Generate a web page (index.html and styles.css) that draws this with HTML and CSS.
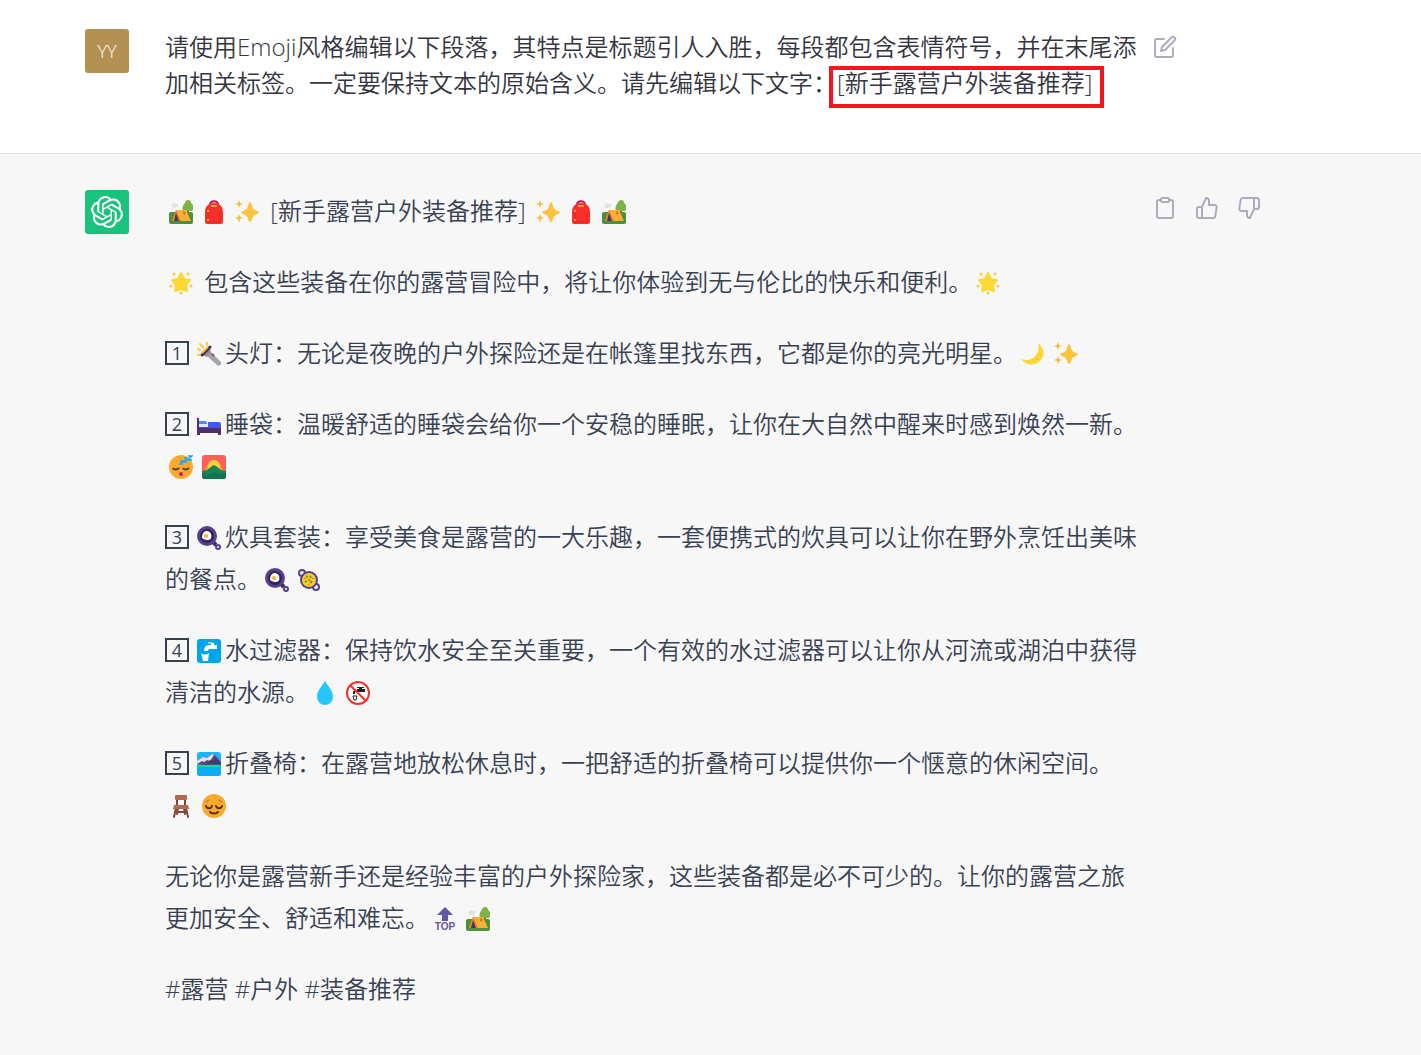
FILE: index.html
```
<!DOCTYPE html>
<html lang="zh-CN">
<head>
    <meta charset="UTF-8">
    <meta name="viewport" content="width=device-width, initial-scale=1.0">
    <title>新手露营户外装备推荐</title>
    <link rel="stylesheet" href="styles.css">
</head>
<body>
    <!-- Icon sprite -->
    <svg class="sprite" aria-hidden="true">
        <symbol id="camp" viewBox="0 0 24 24">
            <path d="M3 5c0-2 3-3 4-1 2-1 3 1 2 2L7 8H4C2 8 2 6 3 5z" fill="#e3e3e3"/>
            <path d="M18 7h2v8h-2z" fill="#8a5a44"/>
            <path d="M19 0c-2 0-3 2-3 3-2 1-4 7-1 8h8c2-2 2-6-1-8 0-2-1-3-3-3z" fill="#7cb342"/>
            <rect y="12" width="24" height="12" rx="2" fill="#4c8f3c"/>
            <path d="M7 10h10l5 11H3z" fill="#fbb034"/>
            <path d="M7 10l5 11H3z" fill="#f57c1f"/>
            <path d="M7 13l3 8H5z" fill="#3a3a72"/>
            <path d="M14 11l3 1-1 3-2-1z" fill="#f2701d"/>
        </symbol>
        <symbol id="bag" viewBox="0 0 24 24">
            <path d="M8 5c0-5 8-5 8 0" fill="none" stroke="#c2185b" stroke-width="2"/>
            <path d="M3 12c0-6 4-9 9-9s9 3 9 9v10c0 1-1 2-2 2H5c-1 0-2-1-2-2z" fill="#f92f2a"/>
            <path d="M6 12v10h12V12" fill="none" stroke="#df2428"/>
            <path d="M9 6h6M6 10v2M6 19v2" stroke="#ffa233" stroke-width="2"/>
        </symbol>
        <symbol id="sparkles" viewBox="0 0 24 24">
            <path d="M15 2c1 0 1 1 2 4 1 3 2 4 5 5s2 2 0 3c-3 1-4 2-5 5-1 4-3 4-4 0-1-3-2-4-5-5-2-1-3-2 0-3s4-2 5-5c1-3 1-4 2-4z" fill="#fcc43c"/>
            <path d="M4 0l1 3 3 1-3 1-1 3-1-3-3-1 3-1zM4 14l1 3 3 1-3 1-1 4-1-4-3-1 3-1z" fill="#fcb83c"/>
        </symbol>
        <symbol id="star" viewBox="0 0 24 24">
            <path d="M12 2l3 6 6 1-4 5 1 6-6-2-6 2 1-6-4-5 6-1z" fill="#fdd835" stroke="#fdd835" stroke-width="2" stroke-linejoin="round"/>
            <g fill="#fccb3a"><circle cx="5" cy="3" r="1.500"/><circle cx="19" cy="3" r="1.500"/><circle cx="2" cy="15" r="1.500"/><circle cx="22" cy="15" r="1.500"/><circle cx="12" cy="22" r="1.500"/></g>
        </symbol>
        <symbol id="torch" viewBox="0 0 24 24">
            <path d="M10 11l3-2 11 11c1 2-2 5-4 3L9 13z" fill="#a9a1ae"/>
            <path d="M5 13l8-8 1 6-4 4z" fill="#998ea3"/>
            <path d="M5 13l8-8" stroke="#40304d" stroke-width="3" stroke-linecap="round"/>
            <path d="M5 11l6-6" stroke="#ffb02e" stroke-width="2"/>
            <path d="M3 8L1 7M6 5L3 2M10 3V0M2 13H0" stroke="#ffc83d" stroke-width="2" stroke-linecap="round"/>
            <path d="M15 12l2 2" stroke="#655a6c" stroke-width="2"/>
        </symbol>
        <symbol id="moon" viewBox="0 0 24 24">
            <path d="M17 1c9 7 6 17-1 20-6 3-12 1-16-4 6 2 11 1 15-4 3-4 3-8 2-12z" fill="#fdd835"/>
            <circle cx="16" cy="17" r="1" fill="#f2bd2c"/><circle cx="19" cy="12" r="1" fill="#f2bd2c"/>
        </symbol>
        <symbol id="bed" viewBox="0 0 24 24">
            <path d="M0 5h2v9h22v8h-3v-2H3v2H0z" fill="#4b2f70"/>
            <path d="M2 14h22v1H2z" fill="#6d4aa1"/>
            <path d="M11 9h11c1 0 2 1 2 2v3H11z" fill="#3d58ff"/>
            <path d="M2 8h6c2 0 2 2 2 3H2z" fill="#4f8bff"/>
            <path d="M2 11h9v3H2z" fill="#dfe6ff"/>
        </symbol>
        <symbol id="sleeping" viewBox="0 0 24 24">
            <circle cx="12" cy="12" r="12" fill="#fcaa2b"/>
            <path d="M4 13c1 2 4 2 6 0M14 13c1 2 4 2 6 0" fill="none" stroke="#5c3a25" stroke-width="2"/>
            <ellipse cx="12" cy="19" rx="2" ry="2" fill="#bb1d80"/>
            <path d="M11 6h3l-3 3h3M15 3h3l-3 4h3M19 1h4l-4 4h4" fill="none" stroke="#1ba6f2" stroke-width="1.500"/>
        </symbol>
        <symbol id="sunrise" viewBox="0 0 24 24">
            <rect width="24" height="24" rx="3" fill="#ff5f57"/>
            <path d="M3 16a9 9 0 0 1 18 0z" fill="#ff9b2e"/>
            <circle cx="12" cy="11" r="6" fill="#ffd43b"/>
            <path d="M0 16l5-1 5-4c1-1 3-1 4 0l5 4 5 1v5c0 2-1 3-3 3H3c-2 0-3-1-3-3z" fill="#16855b"/>
            <path d="M0 18l6 2 6-3 6 3 6-2v3c0 2-1 3-3 3H3c-2 0-3-1-3-3z" fill="#0d7650"/>
        </symbol>
        <symbol id="egg-pan" viewBox="0 0 24 24">
            <path d="M16 16l3 3" stroke="#3d2d5c" stroke-width="4"/>
            <circle cx="21" cy="21" r="2" fill="none" stroke="#55428a" stroke-width="2"/>
            <circle cx="10" cy="10" r="10" fill="#55428a"/>
            <circle cx="10" cy="10" r="7" fill="#33245a"/>
            <path d="M7 6c2-2 6-1 7 2s0 6-3 6-6-1-6-3 1-4 2-5z" fill="#fff"/>
            <circle cx="9" cy="10" r="2" fill="#ffb02e"/>
        </symbol>
        <symbol id="paella" viewBox="0 0 24 24">
            <g fill="none" stroke="#55428a" stroke-width="2"><circle cx="4" cy="5" r="3"/><circle cx="18" cy="19" r="3"/></g>
            <circle cx="11" cy="12" r="9" fill="#55428a"/>
            <circle cx="11" cy="12" r="7" fill="#ffc928"/>
            <path d="M8 8l2 1M13 8l-1 2M7 13l2 1M12 15l2-2M15 10v1" stroke="#6aa23a" stroke-width="2"/>
            <path d="M10 12h2M7 10v1M10 17h1" stroke="#f47a22" stroke-width="2"/>
        </symbol>
        <symbol id="tap" viewBox="0 0 24 24">
            <rect width="24" height="24" rx="3" fill="#00a6ed"/>
            <path d="M7 12c0-4 2-6 6-6h7v4h-7c-2 0-2 1-2 2z" fill="#fff"/>
            <path d="M11 3l6 1v3h-3V5l-3-1z" fill="#fff"/>
            <path d="M4 14c2 2 5 2 8 0l-1 8H6z" fill="#fff"/>
        </symbol>
        <symbol id="drop" viewBox="0 0 24 24">
            <path d="M12 0c3 5 8 10 8 15 0 12-16 12-16 0C4 10 9 5 12 0z" fill="#26c6fc"/>
        </symbol>
        <symbol id="no-water" viewBox="0 0 24 24">
            <circle cx="12" cy="12" r="11" fill="#fff"/>
            <path d="M7 13v-2c0-1 1-2 3-2h1V8h2V7h-2V6h7v1h-2v1h3v3H9v2z" fill="#222"/>
            <path d="M7 15h4l-1 4H8z" fill="none" stroke="#222"/>
            <circle cx="12" cy="12" r="11" fill="none" stroke="#f8312f" stroke-width="2"/>
            <path d="M4 4l16 16" stroke="#f8312f" stroke-width="2"/>
        </symbol>
        <symbol id="mountain" viewBox="0 0 24 24">
            <rect width="24" height="24" rx="3" fill="#1cb4ff"/>
            <path d="M0 9l5-3 4 1 5-5 4 1 6 7v4H0z" fill="#5c4783"/>
            <path d="M0 9l6-4 4 1 5-4 2 1-4 6-3-1-3 2-2-1-5 3z" fill="#e7e1ef"/>
            <path d="M9 13l4-5 3 1 2-4 6 6v3H9z" fill="#433b6b"/>
            <path d="M0 12c6 2 17 0 24 1v2H0z" fill="#19d69b"/>
            <path d="M0 15h24v6c0 2-1 3-3 3H3c-2 0-3-1-3-3z" fill="#0caef5"/>
        </symbol>
        <symbol id="chair" viewBox="0 0 24 24">
            <path d="M8 4v8M16 4v8M7 14L5 23M17 14l2 9M9 14l-1 6M15 14l1 6M6 18h12" fill="none" stroke="#804838" stroke-width="2" stroke-linecap="round"/>
            <rect x="6" y="1" width="12" height="5" rx="1" fill="#b36a51"/>
            <path d="M5 11h14l1 4H4z" fill="#b36a51"/>
        </symbol>
        <symbol id="relieved" viewBox="0 0 24 24">
            <circle cx="12" cy="12" r="12" fill="#fcaa2b"/>
            <path d="M4 12c1 3 5 3 6 0M14 12c1 3 5 3 6 0M8 18c2 2 6 2 8 0" fill="none" stroke="#4d3322" stroke-width="2" stroke-linecap="round"/>
            <path d="M4 8l3-2M20 8l-3-2" stroke="#a56a20" stroke-linecap="round"/>
        </symbol>
    </svg>

    <main class="chat">
        <section class="message user">
            <div class="row">
                <div class="avatar avatar-user">YY</div>
                <div class="content">
                    <p>请使用Emoji风格编辑以下段落，其特点是标题引人入胜，每段都包含表情符号，并在末尾添加相关标签。一定要保持文本的原始含义。请先编辑以下文字：<span class="highlight">[新手露营户外装备推荐]</span></p>
                </div>
                <div class="actions">
                    <button type="button" aria-label="编辑">
                        <svg viewBox="0 0 24 24"><path d="M11 4H4a2 2 0 0 0-2 2v14a2 2 0 0 0 2 2h14a2 2 0 0 0 2-2v-7"/><path d="M18.5 2.5a2.121 2.121 0 0 1 3 3L12 15l-4 1 1-4 9.500-9.500z"/></svg>
                    </button>
                </div>
            </div>
        </section>

        <section class="message assistant">
            <div class="row">
                <div class="avatar avatar-bot">
                    <svg viewBox="0 0 24 24" role="img" aria-label="ChatGPT"><path d="M22.2819 9.8211a5.9847 5.9847 0 0 0-.5157-4.9108 6.0462 6.0462 0 0 0-6.5098-2.9A6.0651 6.0651 0 0 0 4.9807 4.1818a5.9847 5.9847 0 0 0-3.9977 2.9 6.0462 6.0462 0 0 0 .7427 7.0966 5.98 5.98 0 0 0 .511 4.9107 6.051 6.051 0 0 0 6.5146 2.9001A5.9847 5.9847 0 0 0 13.2599 24a6.0557 6.0557 0 0 0 5.7718-4.2058 5.9894 5.9894 0 0 0 3.9977-2.9001 6.0557 6.0557 0 0 0-.7475-7.0729zm-9.022 12.6081a4.4755 4.4755 0 0 1-2.8764-1.0408l.1419-.0804 4.7783-2.7582a.7948.7948 0 0 0 .3927-.6813v-6.7369l2.02 1.1686a.071.071 0 0 1 .038.052v5.5826a4.504 4.504 0 0 1-4.4945 4.4944zm-9.6607-4.1254a4.4708 4.4708 0 0 1-.5346-3.0137l.142.0852 4.783 2.7582a.7712.7712 0 0 0 .7806 0l5.8428-3.3685v2.3324a.0804.0804 0 0 1-.0332.0615L9.74 19.9502a4.4992 4.4992 0 0 1-6.1408-1.6464zM2.3408 7.8956a4.485 4.485 0 0 1 2.3655-1.9728V11.6a.7664.7664 0 0 0 .3879.6765l5.8144 3.3543-2.0201 1.1685a.0757.0757 0 0 1-.071 0l-4.8303-2.7865A4.504 4.504 0 0 1 2.3408 7.872zm16.5963 3.8558L13.1038 8.364 15.1192 7.2a.0757.0757 0 0 1 .071 0l4.8303 2.7913a4.4944 4.4944 0 0 1-.6765 8.1042v-5.6772a.79.79 0 0 0-.407-.667zm2.0107-3.0231l-.142-.0852-4.7735-2.7818a.7759.7759 0 0 0-.7854 0L9.409 9.2297V6.8974a.0662.0662 0 0 1 .0284-.0615l4.8303-2.7866a4.4992 4.4992 0 0 1 6.6802 4.66zM8.3065 12.863l-2.02-1.1638a.0804.0804 0 0 1-.038-.0567V6.0742a4.4992 4.4992 0 0 1 7.3757-3.4537l-.142.0805L8.704 5.459a.7948.7948 0 0 0-.3927.6813zm1.0976-2.3654l2.602-1.4998 2.6069 1.4998v2.9994l-2.5974 1.4997-2.6067-1.4997Z"/></svg>
                </div>
                <div class="content">
                    <p><svg class="emoji"><use href="#camp"/></svg><svg class="emoji"><use href="#bag"/></svg><svg class="emoji"><use href="#sparkles"/></svg> [新手露营户外装备推荐] <svg class="emoji"><use href="#sparkles"/></svg><svg class="emoji"><use href="#bag"/></svg><svg class="emoji"><use href="#camp"/></svg></p>
                    <p><svg class="emoji"><use href="#star"/></svg> 包含这些装备在你的露营冒险中，将让你体验到无与伦比的快乐和便利。<svg class="emoji"><use href="#star"/></svg></p>
                    <p><span class="number">1</span><svg class="emoji lead"><use href="#torch"/></svg>头灯：无论是夜晚的户外探险还是在帐篷里找东西，它都是你的亮光明星。<svg class="emoji"><use href="#moon"/></svg><svg class="emoji"><use href="#sparkles"/></svg></p>
                    <p><span class="number">2</span><svg class="emoji lead"><use href="#bed"/></svg>睡袋：温暖舒适的睡袋会给你一个安稳的睡眠，让你在大自然中醒来时感到焕然一新。<svg class="emoji"><use href="#sleeping"/></svg><svg class="emoji"><use href="#sunrise"/></svg></p>
                    <p><span class="number">3</span><svg class="emoji lead"><use href="#egg-pan"/></svg>炊具套装：享受美食是露营的一大乐趣，一套便携式的炊具可以让你在野外烹饪出美味的餐点。<svg class="emoji"><use href="#egg-pan"/></svg><svg class="emoji"><use href="#paella"/></svg></p>
                    <p><span class="number">4</span><svg class="emoji lead"><use href="#tap"/></svg>水过滤器：保持饮水安全至关重要，一个有效的水过滤器可以让你从河流或湖泊中获得清洁的水源。<svg class="emoji"><use href="#drop"/></svg><svg class="emoji"><use href="#no-water"/></svg></p>
                    <p><span class="number">5</span><svg class="emoji lead"><use href="#mountain"/></svg>折叠椅：在露营地放松休息时，一把舒适的折叠椅可以提供你一个惬意的休闲空间。<svg class="emoji"><use href="#chair"/></svg><svg class="emoji"><use href="#relieved"/></svg></p>
                    <p>无论你是露营新手还是经验丰富的户外探险家，这些装备都是必不可少的。让你的露营之旅更加安全、舒适和难忘。<svg class="emoji" viewBox="0 0 24 24"><path d="M12 0l8 8h-5v6H9V8H4z" fill="#6654a4"/><text x="12" y="23" class="top-text">TOP</text></svg><svg class="emoji"><use href="#camp"/></svg></p>
                    <p>#露营 #户外 #装备推荐</p>
                </div>
                <div class="actions">
                    <button type="button" aria-label="复制">
                        <svg viewBox="0 0 24 24"><path d="M16 4h2a2 2 0 0 1 2 2v14a2 2 0 0 1-2 2H6a2 2 0 0 1-2-2V6a2 2 0 0 1 2-2h2"/><rect x="8" y="2" width="8" height="4" rx="1"/></svg>
                    </button>
                    <button type="button" aria-label="赞">
                        <svg viewBox="0 0 24 24"><path d="M14 9V5a3 3 0 0 0-3-3l-4 9v11h11.280a2 2 0 0 0 2-1.700l1.380-9a2 2 0 0 0-2-2.300zM7 22H4a2 2 0 0 1-2-2v-7a2 2 0 0 1 2-2h3"/></svg>
                    </button>
                    <button type="button" aria-label="踩">
                        <svg viewBox="0 0 24 24"><path d="M10 15v4a3 3 0 0 0 3 3l4-9V2H5.720a2 2 0 0 0-2 1.700l-1.380 9a2 2 0 0 0 2 2.300zm7-13h2.670A2.310 2.310 0 0 1 22 4v7a2.310 2.310 0 0 1-2.330 2H17"/></svg>
                    </button>
                </div>
            </div>
        </section>
    </main>
</body>
</html>
```
FILE: styles.css
```
* {
    box-sizing: border-box;
}
body {
    margin: 0;
    background-color: #f7f7f8;
    color: #374151;
    font-family: "Open Sans", "Noto Sans CJK SC", sans-serif;
    font-size: 24px;
    font-weight: 350;
}
.sprite {
    position: absolute;
    width: 0;
    height: 0;
}
.message {
    padding: 36px 20px;
}
.user {
    padding: 29px 20px 52px;
    background-color: #fff;
    color: #343541;
    border-bottom: 1px solid #e3e3e6;
}
.row {
    display: flex;
    align-items: flex-start;
    max-width: 1251px;
    margin: 0 auto;
}
.avatar {
    display: flex;
    flex: none;
    align-items: center;
    justify-content: center;
    width: 44px;
    height: 44px;
    margin-right: 36px;
    border-radius: 3px;
    color: #fff;
}
.avatar-user {
    background-color: #b39152;
    font-size: 18px;
}
.avatar-bot {
    background-color: #19c37d;
}
.avatar-bot svg {
    width: 32px;
    height: 32px;
    fill: #fff;
}
.content {
    flex: 1;
    max-width: 976px;
    line-height: 42px;
}
.user .content {
    line-height: 36px;
}
.content p {
    margin: 0 0 29px;
}
.content p:last-child {
    margin-bottom: 0;
}
/* red frame around the topic */
.highlight {
    position: relative;
    white-space: nowrap;
}
.highlight::after {
    content: "";
    position: absolute;
    box-sizing: border-box;
    top: 0;
    left: -8px;
    right: -12px;
    height: 42px;
    border: 4px solid #f5141c;
}
.emoji {
    width: 24px;
    height: 24px;
    margin: 0 5px 0 4px;
    vertical-align: -4px;
}
.emoji.lead {
    margin-right: 4px;
}
.top-text {
    fill: #6654a4;
    font-family: "Liberation Sans", sans-serif;
    font-size: 10px;
    font-weight: 700;
    text-anchor: middle;
}
.number {
    display: inline-block;
    width: 24px;
    height: 24px;
    margin-right: 4px;
    border: 2px solid #374151;
    font-size: 18px;
    font-weight: 400;
    line-height: 20px;
    text-align: center;
    vertical-align: 2px;
}
.actions {
    display: flex;
    gap: 18px;
    margin: 6px 0 0 12px;
}
button {
    width: 24px;
    height: 24px;
    padding: 0;
    border: none;
    background: none;
    color: #acacbe;
    cursor: pointer;
}
button:hover {
    color: #374151;
}
button svg {
    display: block;
    width: 24px;
    height: 24px;
    fill: none;
    stroke: currentColor;
    stroke-width: 2;
    stroke-linecap: round;
    stroke-linejoin: round;
}
```
